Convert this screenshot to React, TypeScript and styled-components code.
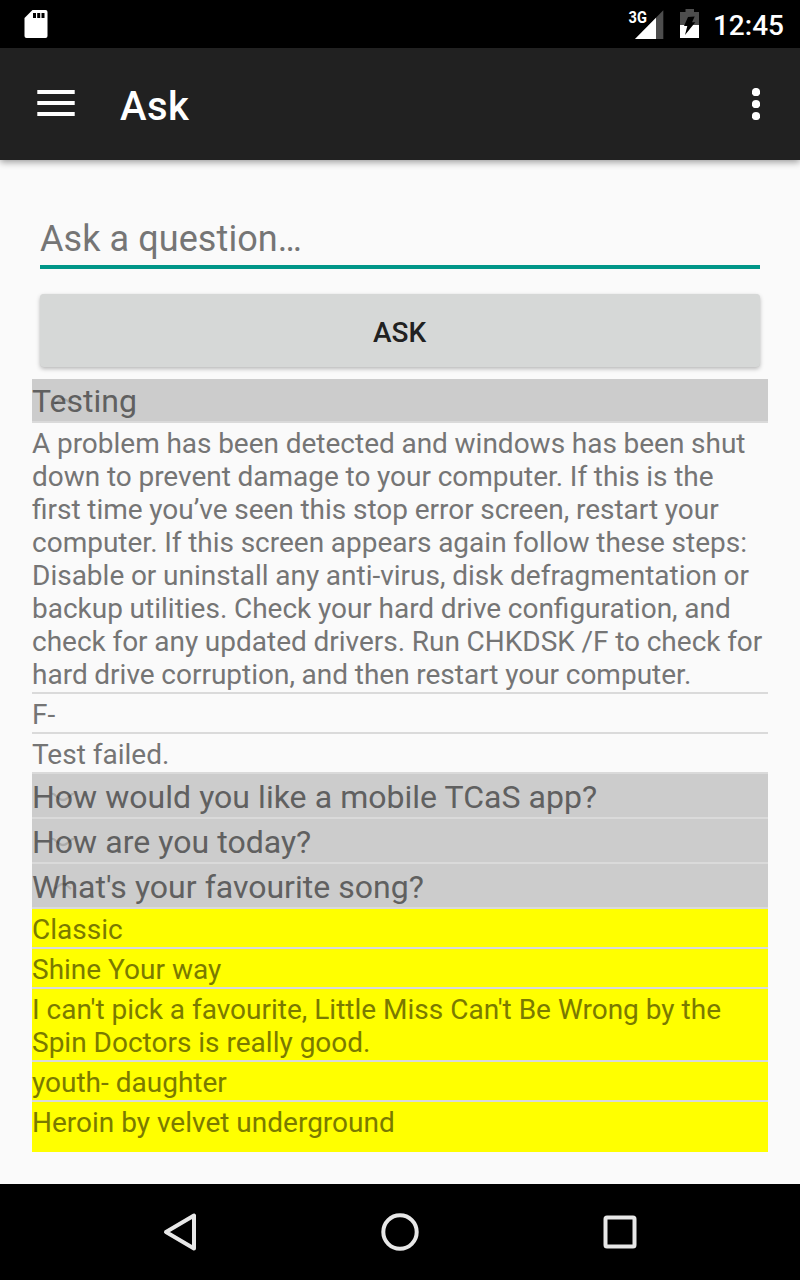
import React from "react";
import styled, { createGlobalStyle } from "styled-components";

const GlobalStyle = createGlobalStyle`
  *, *::before, *::after { box-sizing: border-box; }
  body { margin: 0; background: #fafafa; font-family: Roboto, sans-serif; }
`;

const Screen = styled.div`
  display: flex;
  flex-direction: column;
  width: 800px;
  height: 1280px;
  overflow: hidden;
  background: #fafafa;
`;

const StatusBar = styled.header`
  display: flex;
  align-items: center;
  justify-content: space-between;
  flex: none;
  height: 48px;
  padding: 0 16px 0 24px;
  background: #000;
`;

const StatusIcons = styled.div`
  display: flex;
  align-items: center;
`;

const BatteryIcon = styled.svg`
  margin-left: 16px;
`;

const Clock = styled.span`
  margin-left: 13px;
  padding-top: 2px;
  color: #fff;
  font-size: 28px;
  font-weight: 500;
  line-height: 33px;
`;

const Network = styled.span`
  align-self: flex-start;
  padding-top: 2px;
  margin-right: -13px;
  color: #fff;
  font-size: 17px;
  font-weight: 700;
  line-height: 17px;
  transform: scaleX(0.86);
`;

const Toolbar = styled.div`
  display: flex;
  align-items: center;
  flex: none;
  height: 112px;
  padding: 0 40px 0 37px;
  background: #212121;
  box-shadow: 0 2px 7px rgba(0, 0, 0, 0.4);
`;

const Title = styled.h1`
  flex: 1;
  margin: 0 0 0 45px;
  padding-top: 6px;
  color: #fff;
  font-size: 40px;
  font-weight: 500;
  line-height: 48px;
  letter-spacing: 0.4px;
`;

const Content = styled.main`
  display: flex;
  flex-direction: column;
  flex: 1;
  padding: 55px 32px 32px;
`;

const QuestionInput = styled.input`
  height: 54px;
  margin: 0 8px;
  padding: 0 0 3px;
  border: 0;
  border-bottom: 4px solid #009688;
  border-radius: 0;
  outline: 0;
  background: transparent;
  font-family: Roboto, sans-serif;
  font-size: 36px;
  letter-spacing: 0.08px;
  color: #212121;
  &::placeholder { color: #757575; opacity: 1; }
`;

const AskButton = styled.button`
  height: 73px;
  margin: 25px 8px 12px;
  padding: 4px 1px 0 0;
  border: 0;
  border-radius: 4px;
  background: #d6d8d7;
  box-shadow: 0 2px 4px rgba(0, 0, 0, 0.26), 0 0 1px rgba(0, 0, 0, 0.08);
  color: #212121;
  font-family: Roboto, sans-serif;
  font-size: 28px;
  font-weight: 500;
`;

const List = styled.ul`
  display: flex;
  flex-direction: column;
  flex: 1;
  margin: 0;
  padding: 0;
  list-style: none;
`;

const Row = styled.li<{ $tight?: boolean }>`
  padding: 4px 0 1px;
  border-bottom: 2px solid #dadada;
  color: #757575;
  font-size: 28px;
  line-height: 33px;
  word-spacing: ${(p) => (p.$tight ? "-0.3px" : "normal")};
`;

const QuestionRow = styled(Row)<{ $clipped?: boolean }>`
  position: relative;
  padding-top: ${(p) => (p.$clipped ? 3 : 4)}px;
  background: #ccc;
  color: #606060;
  font-size: 32px;
  line-height: 38px;
  word-spacing: 0.2px;
`;

const AnswerRow = styled(Row)`
  background: #ff0;
  color: #7a7a00;
  background-clip: padding-box;
  &:last-child { flex: 1; border-bottom: 0; }
`;

const Indicator = styled.svg`
  position: absolute;
  left: 19px;
  top: 16px;
`;

const NavBar = styled.nav`
  display: flex;
  align-items: center;
  justify-content: space-between;
  flex: none;
  height: 96px;
  padding: 0 156px;
  background: #000;
`;

const Chevron = ({ open }: { open?: boolean }) => (
  <Indicator width="24" height="14" viewBox="0 0 24 14" fill="none" stroke="#000" strokeOpacity="0.16" strokeWidth="2.2">
    <path d={open ? "M4 9 L8 5.5 Q12 2.5 16 5.5 L20 9" : "M1 4 Q3 3.5 5 6 L8 8.5 Q12 11.5 16 8.5 L19 6 Q21 3.5 23 4"} />
  </Indicator>
);

const questions = ["How would you like a mobile TCaS app?", "How are you today?", "What's your favourite song?"];

const songs = [
  "Classic",
  "Shine Your way",
  "I can't pick a favourite, Little Miss Can't Be Wrong by the Spin Doctors is really good.",
  "youth- daughter",
  "Heroin by velvet underground",
];

export default function App() {
  return (
    <Screen>
      <GlobalStyle />
      <StatusBar>
        <svg width="24" height="28" viewBox="0 0 24 28">
          <path fill="#fff" d="M8.5 0H21.5Q23.5 0 23.5 2V26Q23.5 28 21.5 28H2.5Q.5 28 .5 26V8Z" />
          <path d="M9 3h3v5H9zM13.2 3h3v5h-3zM17.5 3h3v5h-3z" />
        </svg>
        <StatusIcons>
          <Network>3G</Network>
          <svg width="29" height="29" viewBox="0 0 29 29">
            <path fill="#4d4d4d" d="M28.3 .3V29H0Z" />
            <path fill="#fff" d="M21 7.7V29H0Z" />
          </svg>
          <BatteryIcon width="20" height="30" viewBox="0 0 20 30">
            <path fill="#4d4d4d" d="M5.5 0h8.5v3H19v13H0V3h5.5z" />
            <path fill="#fff" d="M0 16h19v13H0z" />
            <path d="M8 8L14.7 7.6L12 13.3H15.3L5 26L7.3 17H4Z" />
          </BatteryIcon>
          <Clock>12:45</Clock>
        </StatusIcons>
      </StatusBar>
      <Toolbar>
        <svg width="38" height="28" viewBox="0 0 38 28" fill="#fff">
          <path d="M.3 0h37.4v4H.3zM.3 11h37.4v4H.3zM.3 22h37.4v4H.3z" />
        </svg>
        <Title>Ask</Title>
        <svg width="8" height="32" viewBox="0 0 8 32" fill="#fff">
          <circle cx="4" cy="4" r="4.1" />
          <circle cx="4" cy="16" r="4.1" />
          <circle cx="4" cy="28" r="4.1" />
        </svg>
      </Toolbar>
      <Content>
        <QuestionInput placeholder="Ask a question…" />
        <AskButton>ASK</AskButton>
        <List>
          <QuestionRow $clipped>
            <Chevron open />
            Testing
          </QuestionRow>
          <Row $tight>
            A problem has been detected and windows has been shut down to prevent damage to your computer. If this is the
            first time you’ve seen this stop error screen, restart your computer. If this screen appears again follow
            these steps: Disable or uninstall any anti-virus, disk defragmentation or backup utilities. Check your hard
            drive configuration, and check for any updated drivers. Run CHKDSK /F to check for hard drive corruption,
            and then restart your computer.
          </Row>
          <Row>F-</Row>
          <Row>Test failed.</Row>
          {questions.map((q, i) => (
            <QuestionRow key={q}>
              <Chevron open={i === 2} />
              {q}
            </QuestionRow>
          ))}
          {songs.map((s) => (
            <AnswerRow key={s}>{s}</AnswerRow>
          ))}
        </List>
      </Content>
      <NavBar>
        <svg width="48" height="48" viewBox="0 0 48 48" fill="none" stroke="#e8e8e8" strokeWidth="4" strokeLinejoin="round">
          <path d="M10 24L38 7.5V40.5Z" />
        </svg>
        <svg width="48" height="48" viewBox="0 0 48 48" fill="none" stroke="#e8e8e8" strokeWidth="4">
          <circle cx="24" cy="24" r="16.7" />
        </svg>
        <svg width="48" height="48" viewBox="0 0 48 48" fill="none" stroke="#e8e8e8" strokeWidth="4">
          <rect x="9.5" y="9.5" width="29" height="29" rx="1.5" />
        </svg>
      </NavBar>
    </Screen>
  );
}
